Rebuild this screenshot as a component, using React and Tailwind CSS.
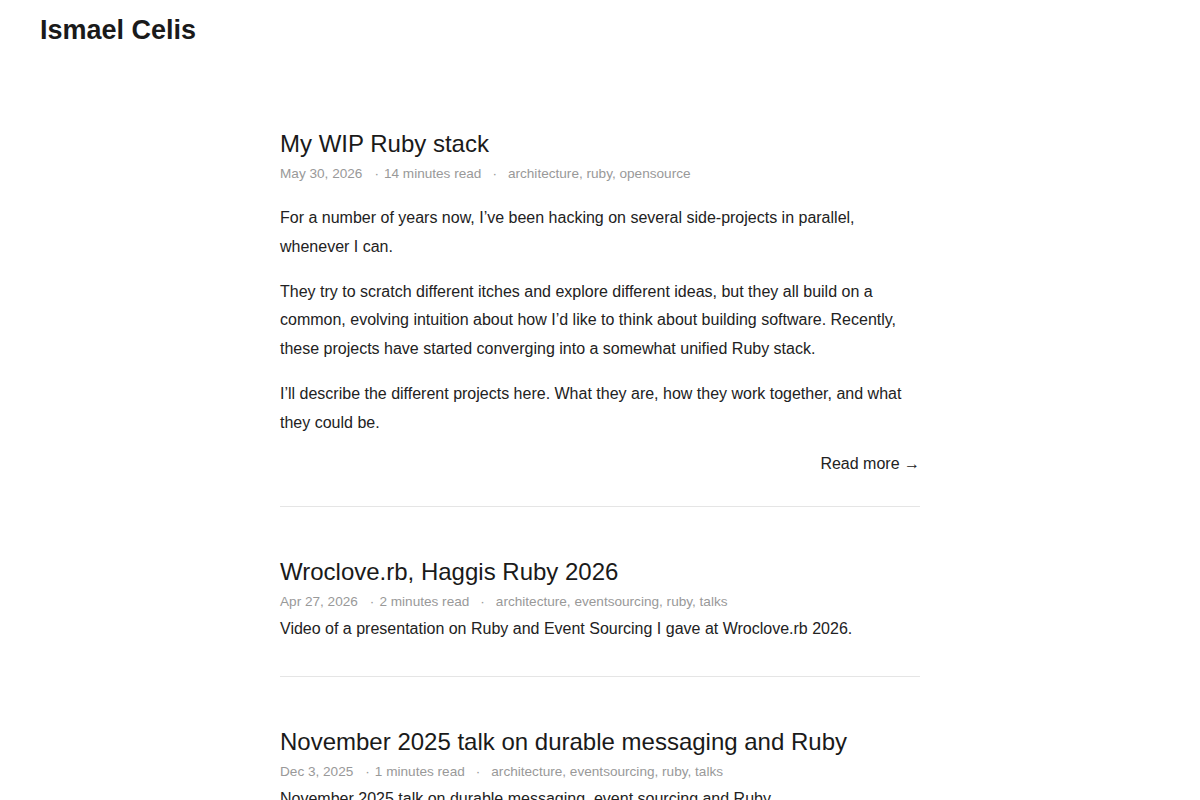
import React from "react";

const posts = [
  {
    title: "My WIP Ruby stack",
    date: "May 30, 2026",
    read: "14 minutes read",
    tags: "architecture, ruby, opensource",
    body: [
      "For a number of years now, I’ve been hacking on several side-projects in parallel, whenever I can.",
      "They try to scratch different itches and explore different ideas, but they all build on a common, evolving intuition about how I’d like to think about building software. Recently, these projects have started converging into a somewhat unified Ruby stack.",
      "I’ll describe the different projects here. What they are, how they work together, and what they could be.",
    ],
    more: true,
  },
  {
    title: "Wroclove.rb, Haggis Ruby 2026",
    date: "Apr 27, 2026",
    read: "2 minutes read",
    tags: "architecture, eventsourcing, ruby, talks",
    summary:
      "Video of a presentation on Ruby and Event Sourcing I gave at Wroclove.rb 2026.",
  },
  {
    title: "November 2025 talk on durable messaging and Ruby",
    date: "Dec 3, 2025",
    read: "1 minutes read",
    tags: "architecture, eventsourcing, ruby, talks",
    summary: "November 2025 talk on durable messaging, event sourcing and Ruby.",
  },
];

function Meta({ post }) {
  return (
    <div className="flex mt-[6px] text-[13.6px] leading-5 text-[#999]">
      <span>{post.date}</span>
      <span className="ml-[12px]">·</span>
      <span className="ml-[5px]">{post.read}</span>
      <span className="ml-[11px]">·</span>
      <span className="ml-[11px]">{post.tags}</span>
    </div>
  );
}

function Post({ post }) {
  return (
    <article className="pt-[50px] border-b border-[#e5e5e5]">
      <h2 className="text-[24px] leading-[29px] text-[#1a1a1a]">
        <a href="#">{post.title}</a>
      </h2>
      <Meta post={post} />
      {post.body ? (
        <div className="mt-5">
          {post.body.map((p, i) => (
            <p key={i} className="mb-4 text-[16px] leading-[28.8px] text-[#222]">
              {p}
            </p>
          ))}
          <div className="flex justify-end mt-[-5px] pb-[28px]">
            <a href="#" className="text-[16px] leading-[29px] text-[#222]">
              Read more <span>→</span>
            </a>
          </div>
        </div>
      ) : (
        <p className="mt-[3px] pb-[33px] text-[16px] leading-[28.8px] text-[#222]">
          {post.summary}
        </p>
      )}
    </article>
  );
}

export default function App() {
  return (
    <div
      className="min-h-screen bg-white"
      style={{ fontFamily: '"Liberation Sans", Arial, sans-serif' }}
    >
      <header className="px-10 pt-[13px]">
        <a href="#" className="text-[27px] leading-[34px] font-bold text-[#1a1a1a]">
          Ismael Celis
        </a>
      </header>
      <main className="w-[640px] mx-auto pt-[32px]">
        {posts.map((post) => (
          <Post key={post.title} post={post} />
        ))}
      </main>
    </div>
  );
}
